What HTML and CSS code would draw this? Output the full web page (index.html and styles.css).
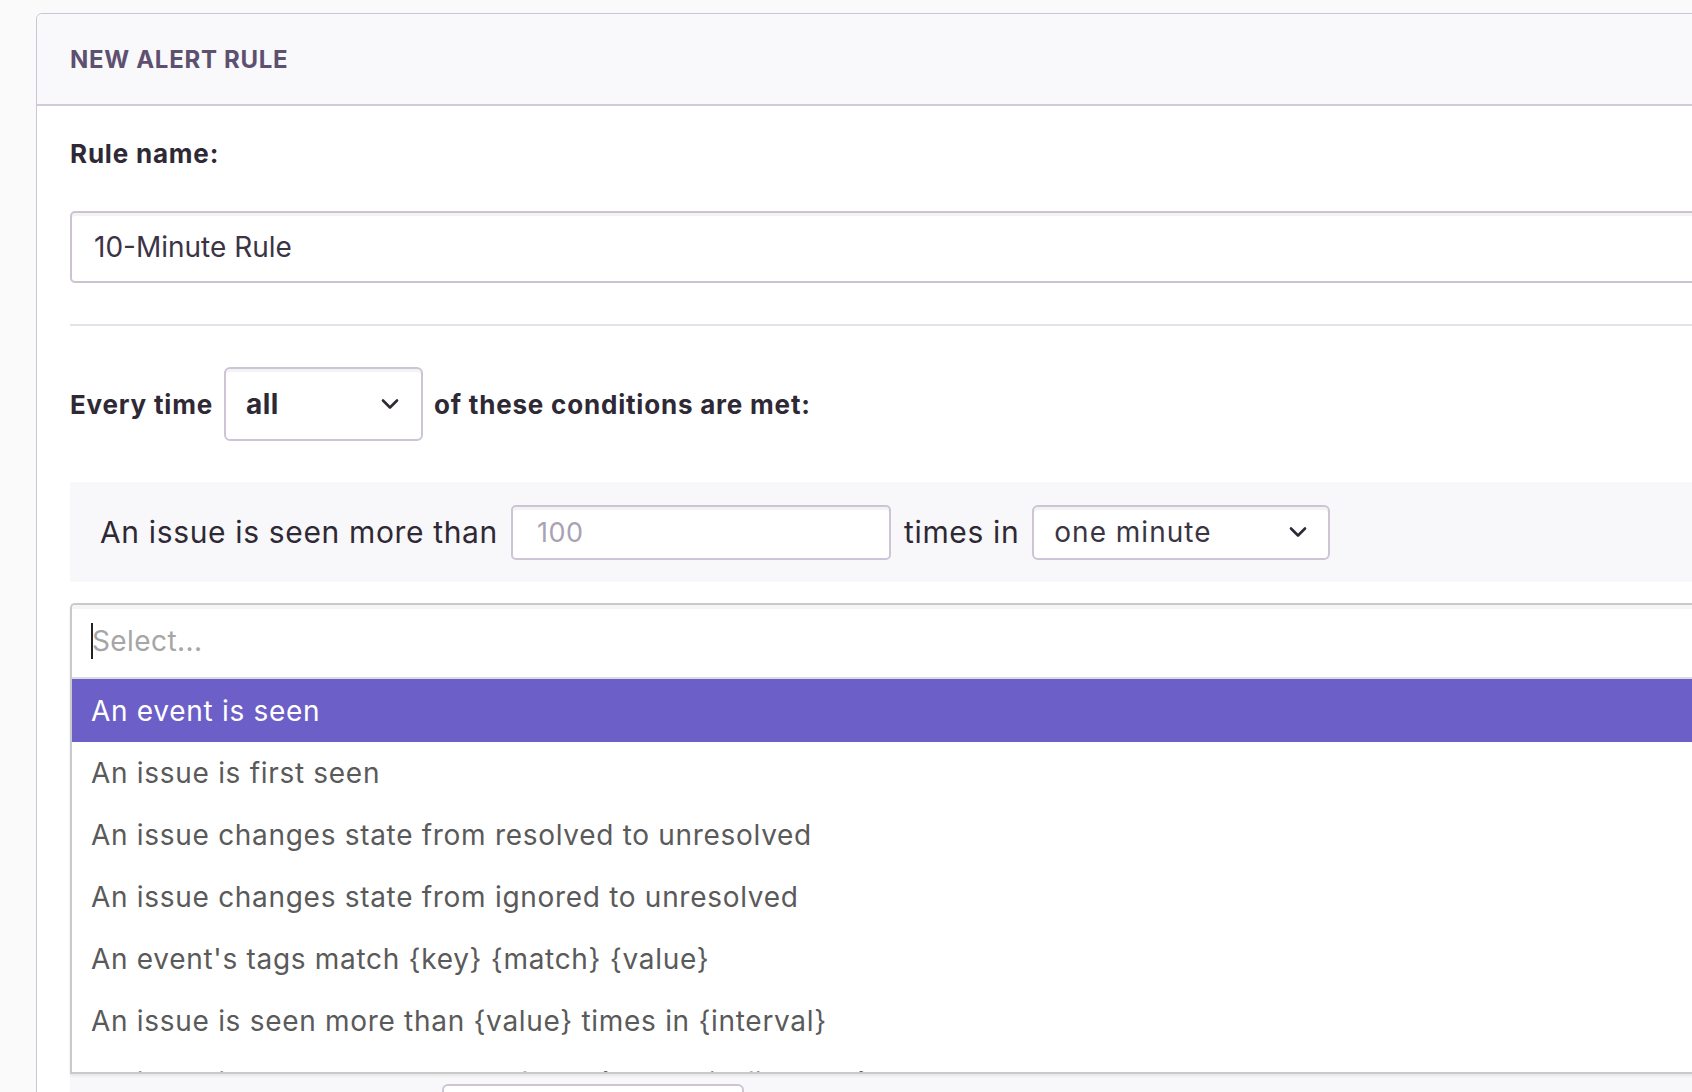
FILE: index.html
```html
<!DOCTYPE html>
<html lang="en">
<head>
<meta charset="utf-8">
<title>New Alert Rule</title>
<link rel="stylesheet" href="styles.css">
</head>
<body>
<div class="page">
  <div class="panel">
    <div class="panel-header">NEW ALERT RULE</div>
    <div class="panel-body">
      <div class="field-label">Rule name:</div>
      <div class="text-input">10-Minute Rule</div>
      <div class="divider"></div>
      <div class="match-row">
        <span class="match-text">Every time</span>
        <div class="select select-all">
          <span class="select-value strong">all</span>
          <svg class="chev" viewBox="0 0 20 12" width="20" height="12"><path d="M3 2.5l7 7 7-7" fill="none" stroke="#2f2936" stroke-width="2.6" stroke-linecap="round" stroke-linejoin="round"/></svg>
        </div>
        <span class="match-text">of these conditions are met:</span>
      </div>
      <div class="condition-row">
        <span class="cond-text">An issue is seen more than</span>
        <div class="num-input">100</div>
        <span class="cond-text">times in</span>
        <div class="select select-interval">
          <span class="select-value">one minute</span>
          <svg class="chev" viewBox="0 0 20 12" width="20" height="12"><path d="M3 2.5l7 7 7-7" fill="none" stroke="#2f2936" stroke-width="2.6" stroke-linecap="round" stroke-linejoin="round"/></svg>
        </div>
      </div>
      <div class="dropdown">
        <div class="dropdown-search"><span class="caret"></span><span class="placeholder">Select...</span></div>
        <ul class="options">
          <li class="option active">An event is seen</li>
          <li class="option">An issue is first seen</li>
          <li class="option">An issue changes state from resolved to unresolved</li>
          <li class="option">An issue changes state from ignored to unresolved</li>
          <li class="option">An event's tags match {key} {match} {value}</li>
          <li class="option">An issue is seen more than {value} times in {interval}</li>
          <li class="option">An issue is seen by more than {value} users in {interval}</li>
        </ul>
      </div>
      <div class="condition-row next-row">
        <div class="ghost-box"></div>
      </div>
    </div>
  </div>
</div>
</body>
</html>
```

FILE: styles.css
```css
html, body {
  margin: 0;
  padding: 0;
  height: 100%;
  overflow: hidden;
  background: #fafafa;
  font-family: Inter, "Liberation Sans", sans-serif;
  color: #2f2936;
}

.page {
  padding: 13px 0 0 36px;
}

.panel {
  width: 1800px;
  background: #fff;
  border: 1px solid #cdc5d6;
  border-radius: 6px 0 0 0;
}

.panel-header {
  height: 90px;
  display: flex;
  align-items: center;
  padding-left: 33px;
  background: #f9f9fb;
  border-bottom: 2px solid #d3cbdb;
  border-radius: 6px 0 0 0;
  font-size: 24px;
  font-weight: 700;
  letter-spacing: 0.7px;
  color: #5e5071;
}

.panel-body {
  padding: 32px 0 0 33px;
}

.field-label {
  font-size: 26px;
  line-height: 32px;
  font-weight: 700;
  letter-spacing: 0.8px;
  color: #2f2936;
}

.text-input {
  margin-top: 41px;
  height: 68px;
  border: 2px solid #cbc3d3;
  border-radius: 5px;
  display: flex;
  align-items: center;
  padding-left: 22px;
  font-size: 28px;
  color: #3b3445;
  box-shadow: inset 0 3px 0 #f3f2f5;
}

.divider {
  margin-top: 41px;
  height: 2px;
  background: #e4e1e8;
}

.match-row {
  margin-top: 41px;
  display: flex;
  align-items: center;
  gap: 11px;
}

.match-text {
  font-size: 26px;
  font-weight: 700;
  letter-spacing: 0.8px;
  color: #2f2936;
}

.select {
  display: flex;
  align-items: center;
  justify-content: space-between;
  background: #fff;
  border: 2px solid #cdc5d6;
  border-radius: 6px;
  box-shadow: inset 0 3px 0 #f3f2f5;
  box-sizing: border-box;
}

.select-all {
  width: 199px;
  height: 74px;
  padding: 0 21px 0 20px;
}

.select-value {
  font-size: 28px;
  color: #2f2936;
}

.select-value.strong {
  font-weight: 700;
  letter-spacing: 0.5px;
}

.condition-row {
  margin-top: 41px;
  height: 100px;
  background: #f8f8fa;
  display: flex;
  align-items: center;
  padding-left: 30px;
  gap: 13px;
}

.cond-text {
  font-size: 30px;
  letter-spacing: 0.65px;
  color: #2f2936;
}

.num-input {
  width: 380px;
  height: 55px;
  box-sizing: border-box;
  border: 2px solid #cdc5d6;
  border-radius: 5px;
  background: #fff;
  display: flex;
  align-items: center;
  padding-left: 24px;
  font-size: 27px;
  letter-spacing: 0.5px;
  color: #aaa2b4;
  box-shadow: inset 0 3px 0 #f3f2f5;
}

.select-interval {
  width: 298px;
  height: 55px;
  padding: 0 20px 0 20px;
}

.select-interval .select-value {
  font-size: 28px;
  letter-spacing: 1px;
  color: #3b3445;
}

.dropdown {
  margin-top: 21px;
  height: 467px;
  border: 2px solid #c9c9c9;
  border-right: none;
  border-radius: 5px 0 0 0;
  overflow: hidden;
  background: #fff;
  box-shadow: 0 2px 3px rgba(0,0,0,0.08);
  position: relative;
  z-index: 2;
}

.dropdown-search {
  height: 72px;
  display: flex;
  align-items: center;
  padding-left: 19px;
  border-bottom: 2px solid #dcdcdc;
  box-shadow: inset 0 4px 0 #f5f5f5;
}

.caret {
  width: 2px;
  height: 36px;
  background: #222;
}

.placeholder {
  font-size: 28px;
  letter-spacing: 0.4px;
  color: #a6a6a6;
  margin-left: -1px;
}

.options {
  list-style: none;
  margin: 0;
  padding: 0;
}

.option {
  height: 62px;
  display: flex;
  align-items: center;
  padding-left: 19px;
  font-size: 28px;
  letter-spacing: 0.7px;
  color: #5a5a5a;
}

.option.active {
  height: 63px;
  background: #6c5fc7;
  color: #fff;
}

.next-row {
  margin-top: 0;
  align-items: flex-start;
  padding-left: 372px;
}

.ghost-box {
  margin-top: 10px;
  width: 298px;
  height: 60px;
  border: 2px solid #cdc5d6;
  border-radius: 6px;
  background: #fff;
}
```
